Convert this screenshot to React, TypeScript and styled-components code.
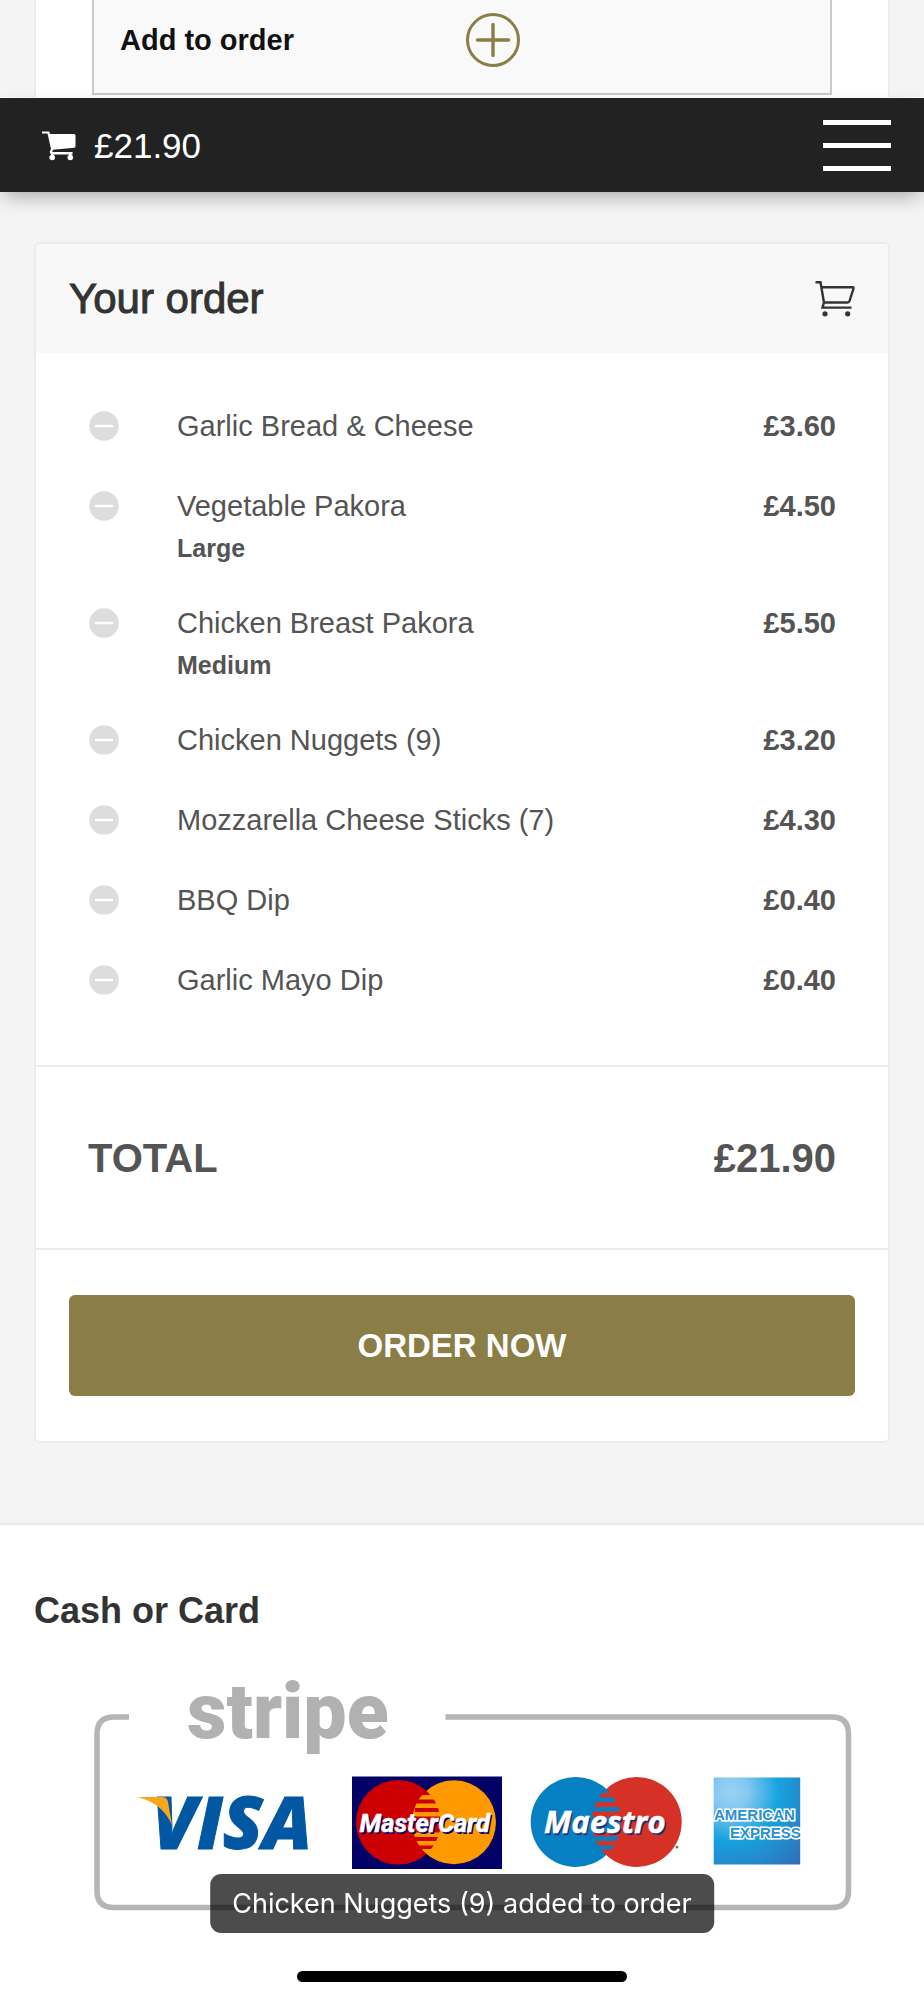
import React from 'react';
import styled, { createGlobalStyle } from 'styled-components';

const GlobalStyle = createGlobalStyle`
  *, *::before, *::after { box-sizing: border-box; }
  body {
    margin: 0;
    background: #fff;
    color: #545454;
    font-family: "Liberation Sans", Arial, sans-serif;
    font-size: 29px;
  }
  button { font: inherit; cursor: pointer; }
`;

const Page = styled.main`
  display: flex;
  flex-direction: column;
`;

const MenuTail = styled.div`
  padding: 0 34px;
  background: #f4f4f4;
  border-bottom: 1px solid #fff;
`;

const MenuPanel = styled.div`
  padding: 0 56px 2px;
  background: #fff;
  border: solid #ececec;
  border-width: 0 2px;
`;

const AddRow = styled.div`
  display: grid;
  grid-template-columns: 1fr 1fr;
  gap: 6px;
  align-items: center;
  height: 95px;
  padding: 0 26px 13px;
  background: #f9f9f9;
  border: solid #cacaca;
  border-width: 0 2px 2px;
`;

const AddLabel = styled.label`
  color: #111;
  font-weight: 700;
  line-height: 34px;
`;

const IconButton = styled.button`
  display: flex;
  padding: 0;
  border: 0;
  background: none;
  color: inherit;
`;

const AddButton = styled(IconButton)`
  justify-self: start;
  color: #8a7d46;
`;

const TopBar = styled.header`
  position: relative;
  z-index: 1;
  display: flex;
  align-items: center;
  justify-content: space-between;
  height: 94px;
  padding: 1px 33px 0 42px;
  background: #222;
  color: #fff;
  box-shadow: 0 8px 18px -4px rgba(0, 0, 0, 0.32);
`;

const BasketLink = styled.a`
  display: flex;
  align-items: center;
  gap: 18px;
  color: #fff;
  font-size: 35px;
  line-height: 40px;
  text-decoration: none;
`;

const OrderArea = styled.section`
  padding: 50px 34px 80px;
  background: #f4f4f4;
  border-bottom: 2px solid #eaeaea;
`;

const Card = styled.div`
  overflow: hidden;
  background: #fff;
  border: 2px solid #ececec;
  border-radius: 6px;
`;

const CardHeader = styled.div`
  display: flex;
  align-items: center;
  justify-content: space-between;
  height: 109px;
  padding: 0 33px;
  background: #f8f8f8;
  color: #333;
`;

const CardTitle = styled.h2`
  margin: 0;
  font-size: 42px;
  font-weight: 400;
  line-height: 48px;
  -webkit-text-stroke: 1px #333;
`;

const Items = styled.ul`
  margin: 0;
  padding: 53px 52px 25px 53px;
  list-style: none;
`;

const Item = styled.li`
  display: grid;
  grid-template-columns: 88px 1fr auto;
  align-items: start;
  padding-bottom: 40px;
  line-height: 40px;
`;

const RemoveButton = styled(IconButton)`
  align-items: center;
  width: 30px;
  height: 40px;
`;

const Option = styled.div`
  padding-top: 4px;
  margin-bottom: -4px;
  font-size: 25px;
  font-weight: 700;
  line-height: 37px;
`;

const Price = styled.span`
  font-weight: 700;
`;

const Total = styled.div`
  display: flex;
  align-items: center;
  justify-content: space-between;
  height: 185px;
  padding: 0 52px;
  border: solid #ececec;
  border-width: 2px 0;
  font-size: 40px;
  font-weight: 700;
  line-height: 48px;
`;

const Checkout = styled.div`
  padding: 45px 33px;
`;

const OrderButton = styled.button`
  display: block;
  width: 100%;
  height: 101px;
  border: 0;
  border-radius: 6px;
  background: #8a7d46;
  color: #fff;
  font-size: 33px;
  font-weight: 700;
`;

const Payments = styled.section`
  padding: 64px 34px 86px;
`;

const PaymentsTitle = styled.h3`
  margin: 0 0 35px;
  color: #333;
  font-size: 36px;
  font-weight: 700;
  line-height: 44px;
`;

const PaymentArt = styled.svg`
  display: block;
  overflow: visible;
  width: 100%;
  padding: 0 38px 0 60px;
`;

const Toast = styled.div`
  position: fixed;
  z-index: 2;
  bottom: 67px;
  left: 50%;
  transform: translateX(-50%);
  padding: 10px 22px;
  border-radius: 11px;
  background: rgba(0, 0, 0, 0.7);
  color: #fff;
  font-family: Inter, sans-serif;
  font-size: 27px;
  line-height: 39px;
  white-space: nowrap;
`;

const HomeIndicator = styled.div`
  position: fixed;
  z-index: 2;
  bottom: 18px;
  left: 50%;
  transform: translateX(-50%);
  width: 330px;
  height: 11px;
  border-radius: 6px;
  background: #000;
`;

interface OrderItem {
  name: string;
  option?: string;
  price: string;
}

const items: OrderItem[] = [
  { name: 'Garlic Bread & Cheese', price: '£3.60' },
  { name: 'Vegetable Pakora', option: 'Large', price: '£4.50' },
  { name: 'Chicken Breast Pakora', option: 'Medium', price: '£5.50' },
  { name: 'Chicken Nuggets (9)', price: '£3.20' },
  { name: 'Mozzarella Cheese Sticks (7)', price: '£4.30' },
  { name: 'BBQ Dip', price: '£0.40' },
  { name: 'Garlic Mayo Dip', price: '£0.40' },
];

const PlusIcon = () => (
  <svg width="56" height="56" viewBox="0 0 56 56" fill="none" stroke="currentColor" strokeWidth="3">
    <circle cx="28" cy="28" r="25.5" />
    <path d="M28 12.500v31M12.500 28h31" strokeWidth="3.400" strokeLinecap="round" />
  </svg>
);

const MinusIcon = () => (
  <svg width="30" height="30" viewBox="0 0 30 30">
    <circle cx="15" cy="15" r="14.8" fill="#ddd" />
    <path d="M7 15h16" stroke="#fff" strokeWidth="2.4" strokeLinecap="round" />
  </svg>
);

const SolidCart = () => (
  <svg width="34" height="30" viewBox="0 0 34 30" fill="#fff">
    <path d="M0 .5h7.200l.9 2.500H32q1.500 0 1.500 1.500V15.500q0 1-1.200 1.200L11 18.800l-.8 2.200H30.500v2.500H9.500q-2-.6-1.700-2.900l1.200-2.500L5.500 2.500H0Z" />
    <path d="M9 22h2.500v4H9zM27 22h2.500v4H27z" />
    <circle cx="10.200" cy="26.500" r="2.800" />
    <circle cx="28.300" cy="26.500" r="2.800" />
  </svg>
);

const OutlineCart = () => (
  <svg width="40" height="38" viewBox="0 0 40 38" fill="none" stroke="currentColor" strokeWidth="2.400">
    <path d="M.5 2.300H5.500L9 22.800M6.300 7.300H37.500q1.300 0 1 1.200L34.500 21q-.5 1.500-1.800 1.500H9L7.500 27.600H36.500" />
    <circle cx="10" cy="33.800" r="2.600" fill="currentColor" stroke="none" />
    <circle cx="32.700" cy="33.800" r="2.600" fill="currentColor" stroke="none" />
  </svg>
);

const BurgerIcon = () => (
  <svg width="68" height="51" viewBox="0 0 68 51" fill="#fff">
    <rect width="68" height="5" />
    <rect y="23" width="68" height="5" />
    <rect y="46" width="68" height="5" />
  </svg>
);

const StripeCards = () => (
  <PaymentArt viewBox="94 1668 758 244" role="img" aria-label="Stripe payments: Visa, MasterCard, Maestro, American Express">
    <defs>
      <radialGradient id="amex" cx="0.2" cy="0.17" r="1.100">
        <stop offset="0" stopColor="#9bd2f5" />
        <stop offset="0.18" stopColor="#85c8f0" />
        <stop offset="0.5" stopColor="#16a3df" />
        <stop offset="1" stopColor="#3071bb" />
      </radialGradient>
      <clipPath id="mcRed"><circle cx="398.300" cy="1822.300" r="42.300" /></clipPath>
      <clipPath id="maBlue"><circle cx="575.700" cy="1822" r="45" /></clipPath>
    </defs>
    <path d="M129 1717H114Q97 1717 97 1734V1891Q97 1907.500 114 1907.500H832Q848.500 1907.500 848.500 1891V1734Q848.500 1717 832 1717H445.500" fill="none" stroke="#b5b5b5" strokeWidth="5.500" />
    <text x="187" y="1738" fill="#b1b1b1" fontFamily="Roboto, sans-serif" fontWeight="900" fontSize="77">stripe</text>

    <text x="152" y="1849" fill="#0157a2" stroke="#0157a2" strokeWidth="1" fontFamily="Open Sans, sans-serif" fontWeight="800" fontStyle="italic" fontSize="73">VISA</text>
    <path d="M139 1797H162Q167 1797 168 1802L172 1825Q162 1803 139 1797.500Z" fill="#faa61a" />

    <rect x="352" y="1776.500" width="150" height="92.500" fill="#000066" />
    <circle cx="398.300" cy="1822.300" r="42.300" fill="#cc0000" />
    <circle cx="454" cy="1822.300" r="42" fill="#ff9900" />
    <g clipPath="url(#mcRed)" fill="#cc0000">
      <path d="M417 1791h18v4h-18zM417 1799.500h22v4h-22zM415 1808h25v4h-25zM413 1816.500h27v16h-27zM414 1837h26v4h-26zM417 1845.500h22v3.500h-22z" />
    </g>
    <g fontFamily="Roboto, sans-serif" fontWeight="700" fontStyle="italic" fontSize="25.500">
      <text x="361" y="1833.500" fill="#000066">MasterCard</text>
      <text x="359.500" y="1832" fill="#fff" stroke="#fff" strokeWidth="0.500">MasterCard</text>
    </g>

    <circle cx="575.700" cy="1822" r="45" fill="#0680c3" />
    <circle cx="636.700" cy="1822" r="45" fill="#d63126" />
    <g clipPath="url(#maBlue)" fill="#0680c3">
      <path d="M598 1786h20v7h-20zM596 1797.500h22v4.500h-22zM592 1807h30v4.500h-30zM591 1817h30v15h-30zM592 1836.500h30v4.500h-30zM596 1845.500h24v4h-24z" />
    </g>
    <g fontFamily="Open Sans, sans-serif" fontWeight="700" fontStyle="italic" fontSize="31">
      <text x="545.500" y="1834.500" fill="#20306f">Maestro</text>
      <text x="544" y="1833" fill="#fff" stroke="#fff" strokeWidth="0.500">Maestro</text>
    </g>
    <circle cx="677" cy="1847" r="1.500" fill="#777" />

    <rect x="713.700" y="1777.500" width="86.500" height="87" fill="url(#amex)" />
    <g fontFamily="Liberation Sans, sans-serif" fontWeight="700" fontSize="15" fill="#2b8fd0" stroke="#fff" strokeWidth="3" paintOrder="stroke">
      <text x="714" y="1820">AMERICAN</text>
      <text x="730" y="1838">EXPRESS</text>
    </g>
  </PaymentArt>
);

export default function App() {
  return (
    <>
      <GlobalStyle />
      <Page>
        <MenuTail>
          <MenuPanel>
            <AddRow>
              <AddLabel htmlFor="add-to-order">Add to order</AddLabel>
              <AddButton id="add-to-order" type="button"><PlusIcon /></AddButton>
            </AddRow>
          </MenuPanel>
        </MenuTail>

        <TopBar>
          <BasketLink href="#order"><SolidCart />£21.90</BasketLink>
          <IconButton type="button" aria-label="Menu"><BurgerIcon /></IconButton>
        </TopBar>

        <OrderArea id="order">
          <Card>
            <CardHeader>
              <CardTitle>Your order</CardTitle>
              <OutlineCart />
            </CardHeader>
            <Items>
              {items.map((item) => (
                <Item key={item.name}>
                  <RemoveButton type="button" aria-label={`Remove ${item.name}`}><MinusIcon /></RemoveButton>
                  <div>
                    {item.name}
                    {item.option && <Option>{item.option}</Option>}
                  </div>
                  <Price>{item.price}</Price>
                </Item>
              ))}
            </Items>
            <Total><span>TOTAL</span><span>£21.90</span></Total>
            <Checkout>
              <OrderButton type="button">ORDER NOW</OrderButton>
            </Checkout>
          </Card>
        </OrderArea>

        <Payments>
          <PaymentsTitle>Cash or Card</PaymentsTitle>
          <StripeCards />
        </Payments>
      </Page>
      <Toast role="status">Chicken Nuggets (9) added to order</Toast>
      <HomeIndicator />
    </>
  );
}
